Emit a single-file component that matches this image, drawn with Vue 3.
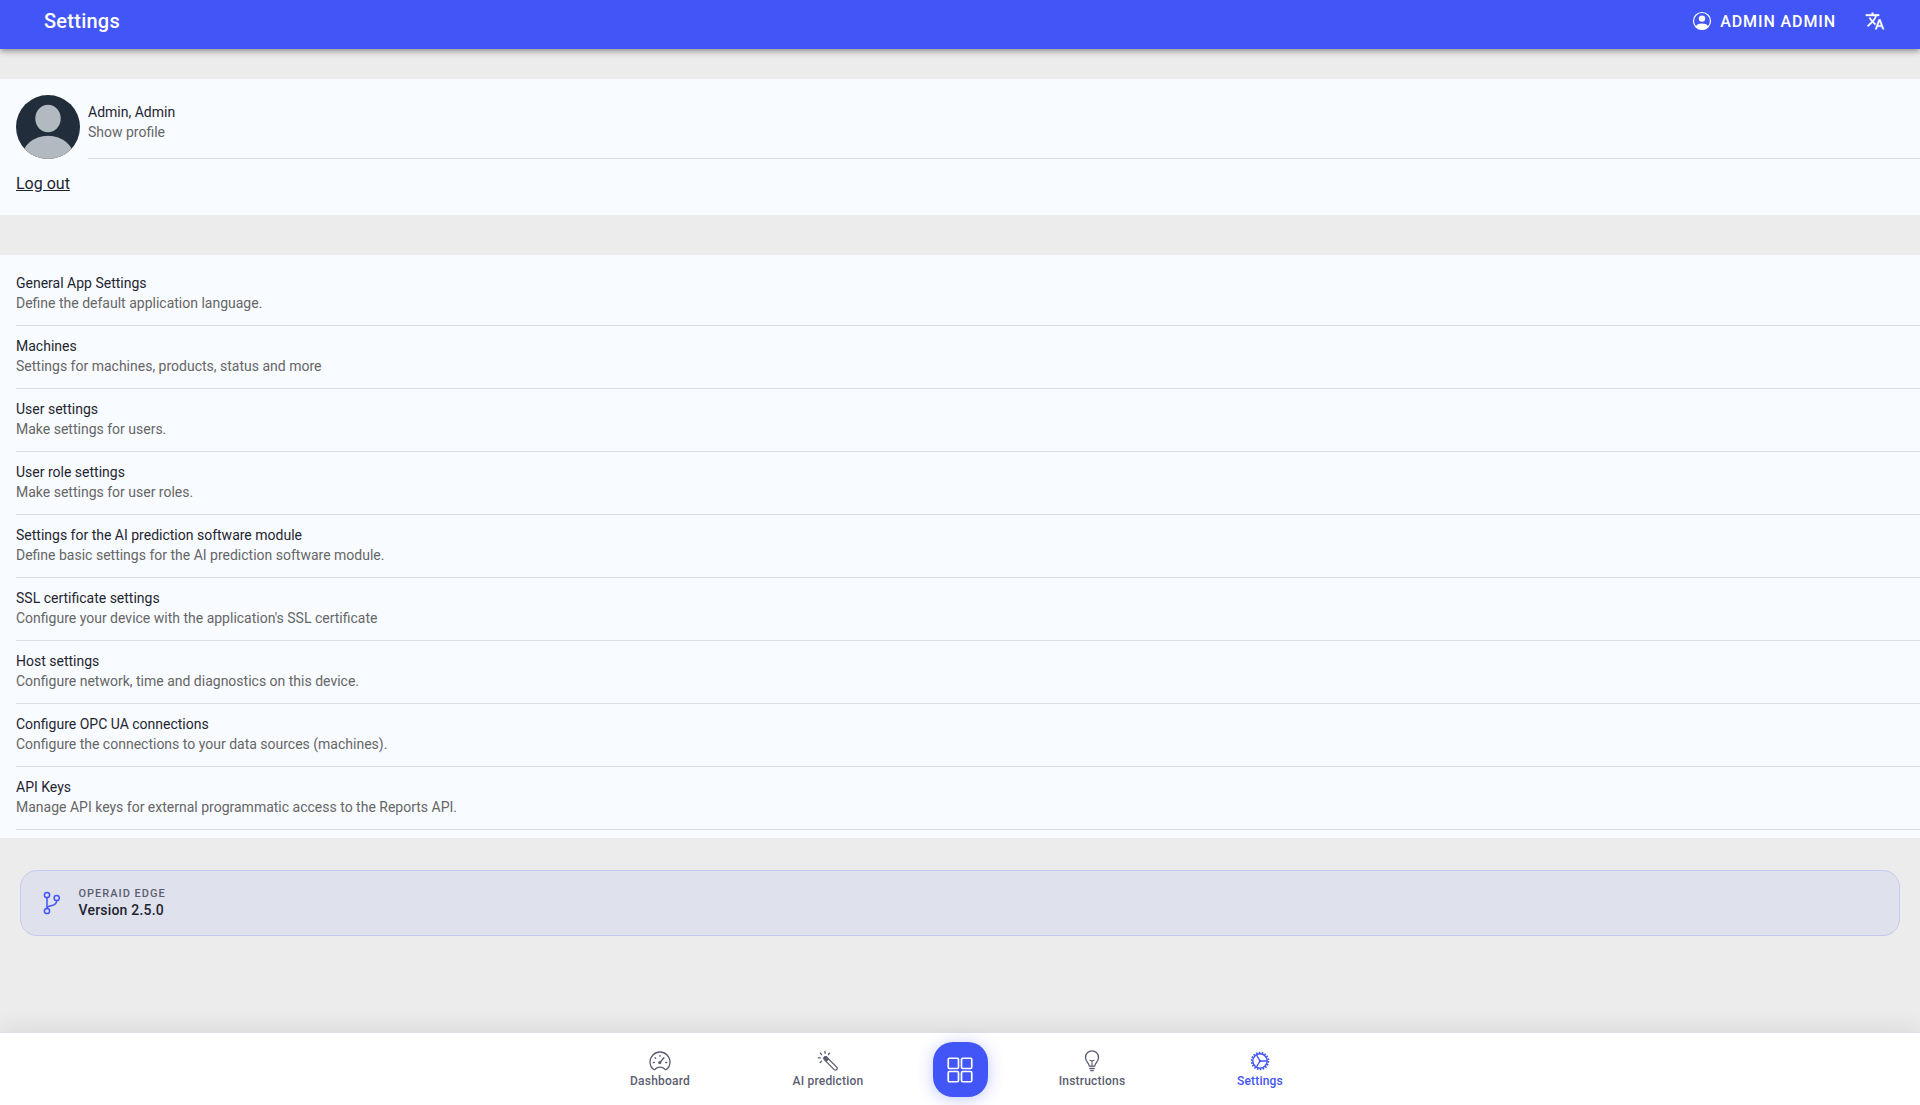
<template>
  <div class="page">
    <header class="navbar">
      <h1 class="navbar-title">Settings</h1>
      <div class="navbar-actions">
        <button class="user-button">
          <svg class="user-icon" viewBox="0 0 20 20">
            <circle cx="10" cy="10" r="8.5" fill="none" stroke="currentColor" stroke-width="1.2" />
            <circle cx="10" cy="7.6" r="3.2" fill="currentColor" />
            <path d="M3.8 15.2C5 13.2 7.3 12.5 10 12.5s5 .7 6.2 2.7C14.9 17.5 12.6 18.700 10 18.700s-4.900-1.200-6.200-3.500z" fill="currentColor" />
          </svg>
          <span>ADMIN ADMIN</span>
        </button>
        <button class="lang-button">
          <svg viewBox="0 0 24 24">
            <path fill="currentColor" stroke="currentColor" stroke-width="0.4" d="M12.870 15.070l-2.540-2.510.030-.030A17.520 17.520 0 0 0 14.070 6H17V4h-7V2H8v2H1v1.990h11.170C11.500 7.920 10.440 9.750 9 11.350 8.070 10.320 7.300 9.190 6.690 8h-2c.730 1.630 1.730 3.170 2.980 4.560l-5.090 5.020L4 19l5-5 3.110 3.110.760-2.040zM18.500 10h-2L12 22h2l1.120-3h4.750L21 22h2l-4.500-12zm-2.620 7l1.620-4.330L19.120 17h-3.240z" />
          </svg>
        </button>
      </div>
    </header>

    <main class="content">
      <section class="block profile-block">
        <a class="profile">
          <svg class="avatar" viewBox="0 0 64 64">
            <defs>
              <clipPath id="avatar-clip"><circle cx="32" cy="32" r="32" /></clipPath>
            </defs>
            <g clip-path="url(#avatar-clip)">
              <rect width="64" height="64" fill="#212d3a" />
              <ellipse cx="32" cy="23.500" rx="12.700" ry="13.700" fill="#b2b9c0" />
              <ellipse cx="32" cy="64" rx="26.500" ry="23.300" fill="#b2b9c0" />
            </g>
          </svg>
          <div class="profile-text">
            <div class="item-title">Admin, Admin</div>
            <div class="item-text">Show profile</div>
          </div>
        </a>
        <a class="logout">Log out</a>
      </section>

      <section class="block settings-block">
        <a v-for="item in items" :key="item.title" class="item">
          <div class="item-title">{{ item.title }}</div>
          <div class="item-text">{{ item.text }}</div>
        </a>
      </section>

      <section class="version-card">
        <svg class="branch-icon" viewBox="0 0 18 24">
          <g fill="none" stroke="currentColor" stroke-width="1.500" stroke-linecap="round">
            <circle cx="4" cy="4" r="2.600" />
            <circle cx="4" cy="20" r="2.600" />
            <circle cx="13.700" cy="7" r="2.600" />
            <path d="M4 6.700v10.600M4 17.300c.2-4.300 9.400-.5 9.700-7.600" />
          </g>
        </svg>
        <div class="version-text">
          <div class="version-label">OPERAID EDGE</div>
          <div class="version-value">Version 2.5.0</div>
        </div>
      </section>
    </main>

    <nav class="tabbar">
      <a class="tab">
        <svg viewBox="0 0 22 22">
          <g fill="none" stroke="currentColor" stroke-width="1.300" stroke-linecap="round" stroke-linejoin="round">
            <path d="M4.700 19.500C2.300 17.700 1 15 1 12a10 10 0 0 1 20 0c0 3-1.300 5.700-3.700 7.500-.5.300-.9.200-1.300-.2-2.900-2.800-7.100-2.800-10 0-.4.400-.8.500-1.300.2z" />
            <path d="M4.300 12.500h1M16.700 12.500h1M6.100 7.800l.6.600M11 5.300v1M10.700 12.700L15 7.800" />
          </g>
          <circle cx="10.800" cy="12.600" r="1.600" fill="currentColor" />
        </svg>
        <span>Dashboard</span>
      </a>
      <a class="tab">
        <svg viewBox="0 0 22 22">
          <g fill="none" stroke="currentColor" stroke-width="1.300" stroke-linecap="round" stroke-linejoin="round">
            <path d="M7.300 9.600a1.700 1.700 0 0 1 2.400-2.400l10 9.900a1.750 1.750 0 0 1-2.500 2.500z" />
            <path d="M8 1.300v2M3.300 3.100l1.300 1.400M1.300 7.900h2M3.200 12.600l1.300-1.400M12.700 3.100l-1.300 1.400" />
          </g>
          <path d="M6.800 9.200a2.100 2.100 0 0 1 2.900-2.900l2.700 2.600-2.900 2.900z" fill="currentColor" />
        </svg>
        <span>AI prediction</span>
      </a>
      <div class="fab-slot">
        <button class="fab">
          <svg viewBox="0 0 26 26">
            <g fill="none" stroke="currentColor" stroke-width="1.700">
              <rect x="1.250" y="1.250" width="10.250" height="10.250" rx="1.200" />
              <rect x="14.500" y="1.250" width="10.250" height="10.250" rx="1.200" />
              <rect x="1.250" y="14.500" width="10.250" height="10.250" rx="1.200" />
              <rect x="14.500" y="14.500" width="10.250" height="10.250" rx="1.200" />
            </g>
          </svg>
        </button>
      </div>
      <a class="tab">
        <svg viewBox="0 0 22 22">
          <g fill="none" stroke="currentColor" stroke-width="1.300" stroke-linecap="round" stroke-linejoin="round">
            <path d="M8.300 16.100c-.2-2.900-3.800-4.400-3.800-8.700a6.500 6.500 0 0 1 13 0c0 4.300-3.600 5.800-3.800 8.700zM8.800 18.500h4.400M9.700 20.700h2.600" />
            <path d="M11 16v-5.300M9 10.300l2 .8 2-.8" stroke-width="1.100" />
          </g>
        </svg>
        <span>Instructions</span>
      </a>
      <a class="tab active">
        <svg viewBox="0 0 22 22">
          <g fill="none" stroke="currentColor">
            <circle cx="11" cy="11" r="7.200" stroke-width="1.400" />
            <circle cx="11" cy="11" r="8.400" stroke-width="1.700" stroke-dasharray="1.600 1.332" />
            <path d="M11 11h7M11 11L7.500 5M11 11l-3.500 6" stroke-width="1.400" />
          </g>
          <circle cx="11" cy="11" r="1.200" fill="currentColor" />
        </svg>
        <span>Settings</span>
      </a>
    </nav>
  </div>
</template>

<script setup>
const items = [
  { title: 'General App Settings', text: 'Define the default application language.' },
  { title: 'Machines', text: 'Settings for machines, products, status and more' },
  { title: 'User settings', text: 'Make settings for users.' },
  { title: 'User role settings', text: 'Make settings for user roles.' },
  {
    title: 'Settings for the AI prediction software module',
    text: 'Define basic settings for the AI prediction software module.'
  },
  { title: 'SSL certificate settings', text: "Configure your device with the application's SSL certificate" },
  { title: 'Host settings', text: 'Configure network, time and diagnostics on this device.' },
  { title: 'Configure OPC UA connections', text: 'Configure the connections to your data sources (machines).' },
  { title: 'API Keys', text: 'Manage API keys for external programmatic access to the Reports API.' }
];
</script>

<style>
body {
  background: #ececec;
}
</style>

<style scoped>
.page {
  display: flex;
  flex-direction: column;
  height: 100vh;
  overflow: hidden;
  font-family: Roboto, sans-serif;
  color: #1f2530;
  background: #ececec;
}

button {
  padding: 0;
  border: 0;
  color: inherit;
  font: inherit;
  background: none;
}

.navbar {
  display: flex;
  align-items: center;
  justify-content: space-between;
  flex: none;
  box-sizing: border-box;
  height: 49px;
  padding: 0 35px 7px 44px;
  color: #fff;
  background: #4255f6;
  box-shadow: 0 2px 4px -1px rgba(0, 0, 0, 0.2), 0 4px 5px 0 rgba(0, 0, 0, 0.14), 0 1px 10px 0 rgba(0, 0, 0, 0.12);
}

.navbar-title {
  margin: 0;
  font-size: 20px;
  font-weight: 500;
  letter-spacing: 0.25px;
}

.navbar-actions {
  display: flex;
  align-items: center;
  gap: 29px;
}

.user-button {
  display: flex;
  align-items: center;
  gap: 8px;
  font-size: 16px;
  font-weight: 500;
  letter-spacing: 0.9px;
}

.user-icon {
  width: 20px;
  height: 20px;
}

.lang-button svg {
  display: block;
  width: 20px;
  height: 20px;
}

.content {
  flex: 1;
  min-height: 0;
  padding-top: 30px;
}

.block {
  background: #f8fbff;
}

.profile-block {
  box-sizing: border-box;
  height: 136px;
  padding: 16px 0 0 16px;
}

.profile {
  display: flex;
  gap: 8px;
}

.avatar {
  flex: none;
  width: 64px;
  height: 64px;
}

.profile-text {
  flex: 1;
  box-sizing: border-box;
  height: 64px;
  padding-top: 7px;
  border-bottom: 1px solid #dadfe5;
}

.item-title,
.item-text {
  font-size: 14px;
  line-height: 20px;
}

.item-text {
  color: #666;
}

.logout {
  display: inline-block;
  margin-top: 13px;
  font-size: 16px;
  line-height: 24px;
  text-decoration: underline;
}

.settings-block {
  margin-top: 40px;
  padding: 8px 0 8px 16px;
}

.item {
  display: block;
  padding: 10px 0 12px;
  border-bottom: 1px solid #dadfe5;
}

.version-card {
  display: flex;
  align-items: center;
  gap: 17.5px;
  box-sizing: border-box;
  height: 66px;
  margin: 32px 20px 0;
  padding: 0 22px;
  border: 1px solid #c6c9ef;
  border-radius: 17px;
  background: #dfe1ec;
}

.branch-icon {
  width: 18px;
  height: 24px;
  color: #4255f6;
}

.version-text {
  padding-bottom: 2px;
}

.version-label {
  color: #5b5e70;
  font-size: 11px;
  font-weight: 500;
  line-height: 17px;
  letter-spacing: 1px;
}

.version-value {
  font-size: 14px;
  font-weight: 500;
  line-height: 17px;
  letter-spacing: 0.2px;
}

.tabbar {
  display: flex;
  justify-content: center;
  flex: none;
  height: 72px;
  border-top: 1px solid #dfdfe6;
  background: #fff;
  box-shadow: 0 -4px 24px rgba(0, 0, 0, 0.08);
}

.tab {
  display: flex;
  flex-direction: column;
  align-items: center;
  gap: 1px;
  width: 168px;
  padding-top: 17px;
  color: #5b5e70;
  font-size: 12px;
  font-weight: 500;
  line-height: 16px;
  letter-spacing: 0.2px;
}

.tab svg {
  width: 22px;
  height: 22px;
}

.tab.active {
  color: #4255f6;
}

.fab-slot {
  display: flex;
  justify-content: center;
  width: 96px;
  padding-top: 9px;
}

.fab {
  display: flex;
  align-items: center;
  justify-content: center;
  width: 55px;
  height: 55px;
  border-radius: 20px;
  color: #fff;
  background: #4255f6;
  box-shadow: 0 2px 16px rgba(67, 86, 247, 0.32);
}

.fab svg {
  width: 26px;
  height: 26px;
}
</style>
